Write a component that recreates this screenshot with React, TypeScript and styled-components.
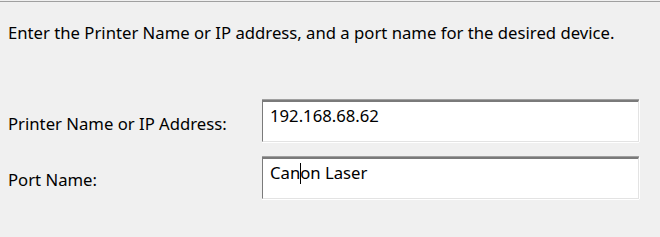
import React from "react";
import styled, { createGlobalStyle } from "styled-components";

const GlobalStyle = createGlobalStyle`
  html, body {
    margin: 0;
    padding: 0;
    background: #f0f0f0;
  }
  body {
    font-family: "Noto Sans", "Open Sans", sans-serif;
    color: #000;
  }
`;

const Page = styled.div`
  width: 660px;
  height: 237px;
  background: #f0f0f0;
  padding-top: 1px;
  box-sizing: border-box;
`;

const Divider = styled.div`
  height: 1px;
  background: #a0a0a0;
`;

const Intro = styled.p`
  margin: 0;
  padding: 20px 0 0 8px;
  font-size: 16.7px;
  line-height: 22px;
  white-space: nowrap;
`;

const Form = styled.div`
  display: grid;
  grid-template-columns: 254px 377px;
  row-gap: 15px;
  padding: 56px 0 0 8px;
`;

const Label = styled.label<{ $top: number }>`
  font-size: 16.7px;
  line-height: 22px;
  padding-top: ${(p) => p.$top}px;
  white-space: nowrap;
`;

const Field = styled.div`
  height: 42px;
  box-sizing: border-box;
  background: #fff;
  border-style: solid;
  border-width: 2px 1px 1px 1px;
  border-color: #7a7a7a #e3e3e3 #e3e3e3 #7a7a7a;
  box-shadow: 0 -1px 0 #a0a0a0, 1px 0 0 #ffffff, 0 1px 0 #ffffff;
  padding: 3px 0 0 7px;
  font-size: 16.7px;
  line-height: 22px;
  white-space: pre;
`;

const Caret = styled.span`
  display: inline-block;
  width: 1px;
  height: 21px;
  margin-right: -1px;
  background: #000;
  vertical-align: -5px;
`;

const App: React.FC = () => {
  return (
    <>
      <GlobalStyle />
      <Page>
        <Divider />
        <Intro>
          Enter the Printer Name or IP address, and a port name for the desired
          device.
        </Intro>
        <Form>
          <Label $top={13}>Printer Name or IP Address:</Label>
          <Field>192.168.68.62</Field>
          <Label $top={12}>Port Name:</Label>
          <Field>
            Can
            <Caret />
            on Laser
          </Field>
        </Form>
      </Page>
    </>
  );
};

export default App;
